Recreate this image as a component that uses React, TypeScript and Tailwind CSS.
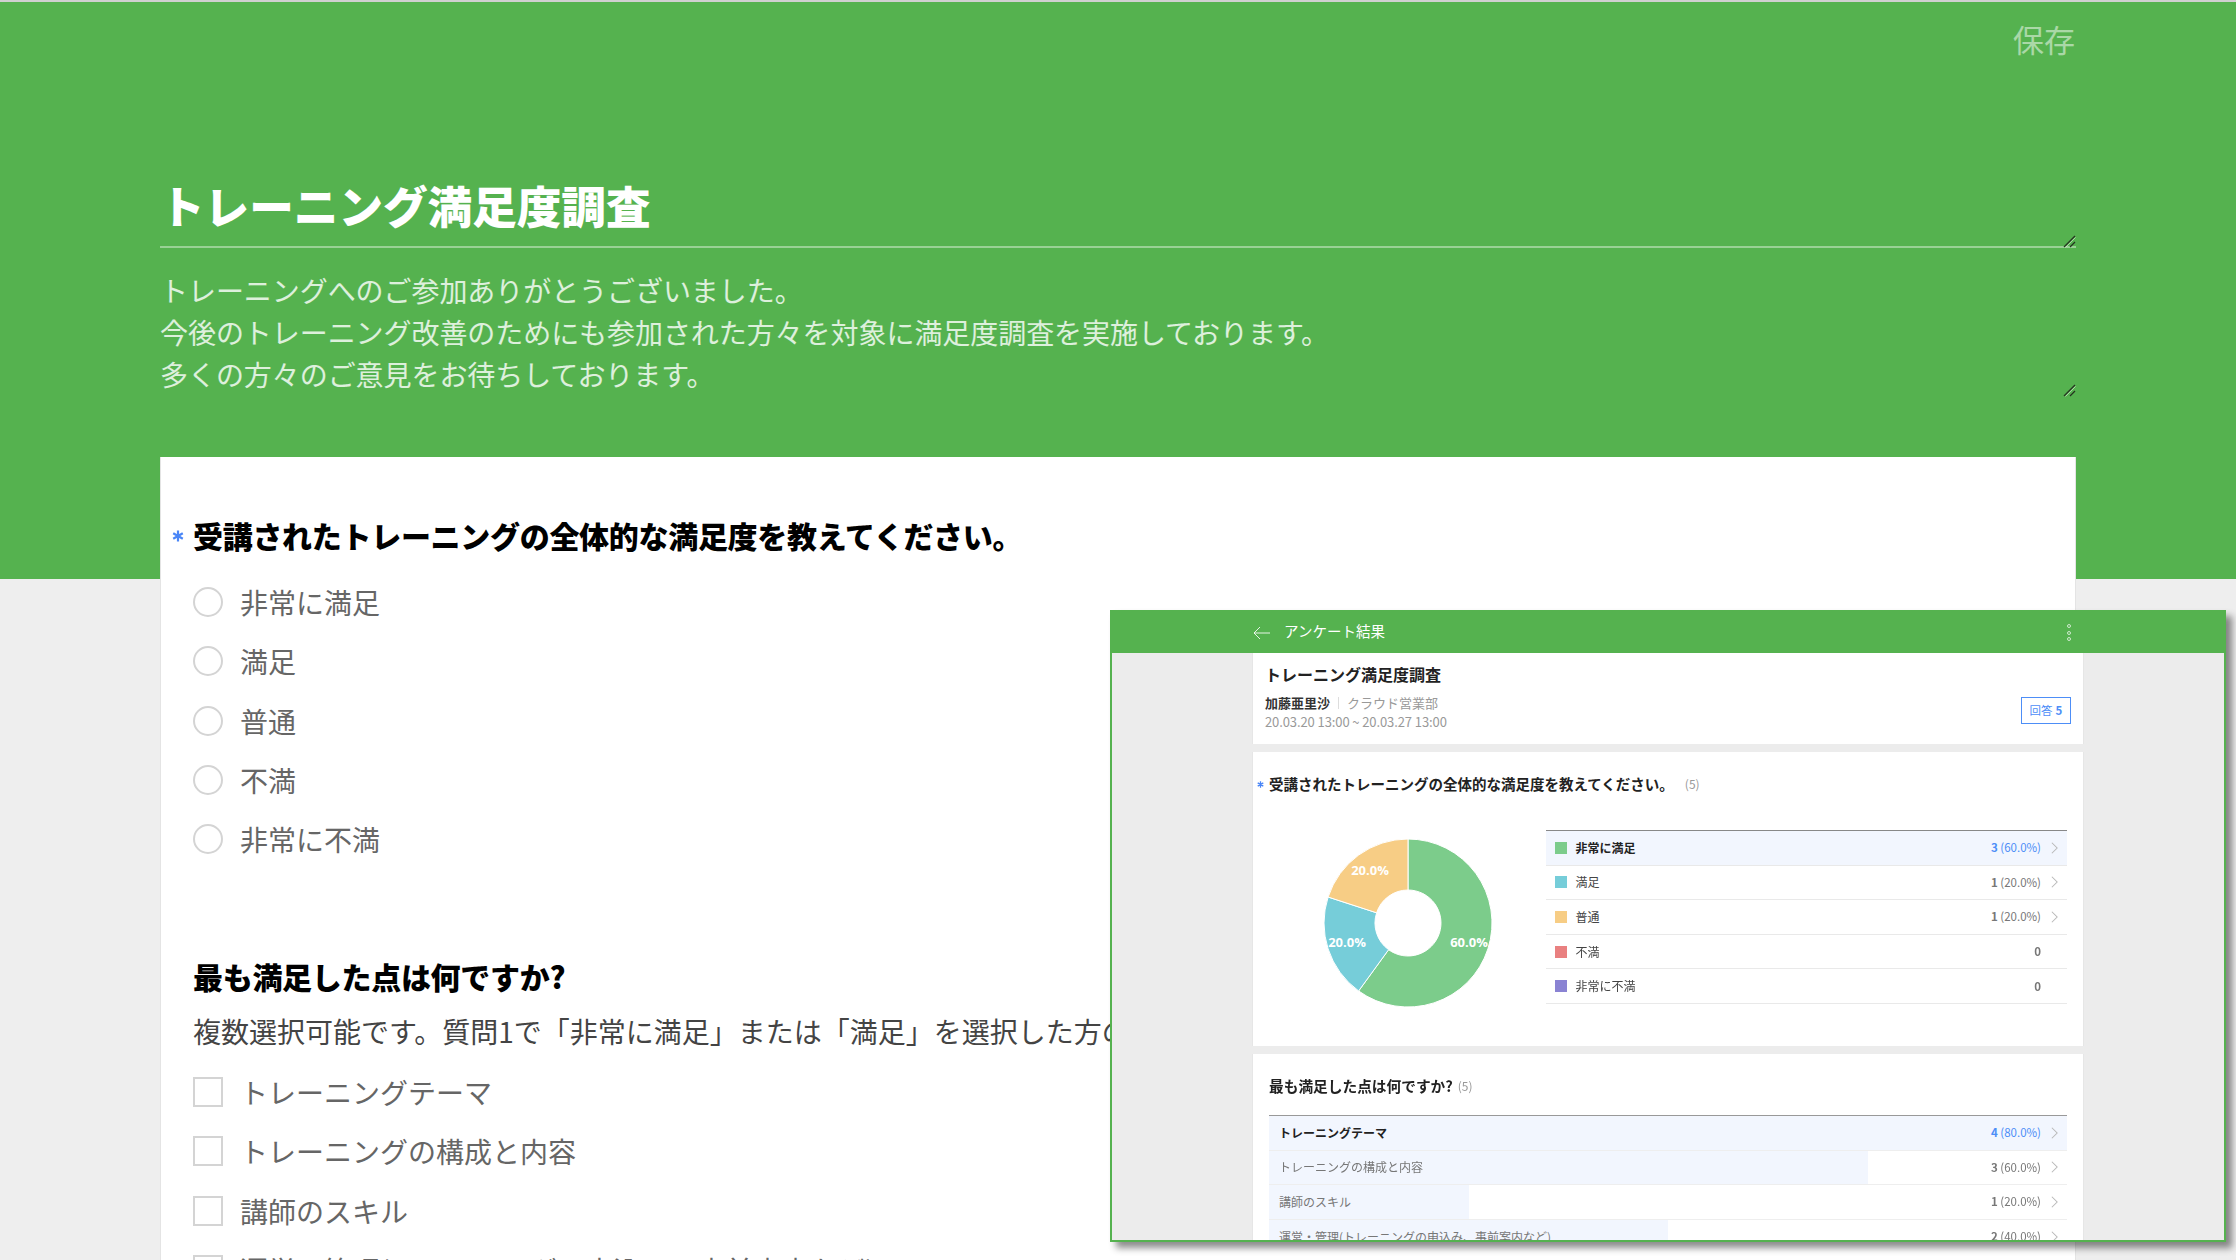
const satisfaction = ["非常に満足", "満足", "普通", "不満", "非常に不満"];
const points = [
  "トレーニングテーマ",
  "トレーニングの構成と内容",
  "講師のスキル",
  "運営・管理(トレーニングの申込み、事前案内など)",
];

const legend = [
  { label: "非常に満足", color: "bg-[#7ccc8b]", count: "3", pct: "(60.0%)", active: true },
  { label: "満足", color: "bg-[#76cdd9]", count: "1", pct: "(20.0%)" },
  { label: "普通", color: "bg-[#f7cd85]", count: "1", pct: "(20.0%)" },
  { label: "不満", color: "bg-[#e98080]", count: "0" },
  { label: "非常に不満", color: "bg-[#8a83d3]", count: "0" },
];

const bars = [
  { label: "トレーニングテーマ", width: 100, count: "4", pct: "(80.0%)", active: true },
  { label: "トレーニングの構成と内容", width: 75, count: "3", pct: "(60.0%)" },
  { label: "講師のスキル", width: 25, count: "1", pct: "(20.0%)" },
  { label: "運営・管理(トレーニングの申込み、事前案内など)", width: 50, count: "2", pct: "(40.0%)" },
];

function ResizeHandle() {
  return (
    <svg className="absolute right-0 -bottom-[2px]" width="13" height="13" viewBox="0 0 13 13" fill="none">
      <path d="M1 12 L12 1" stroke="#24331f" strokeWidth="1.2" />
      <path d="M7 12 L12 7" stroke="#24331f" strokeWidth="1.2" />
      <path d="M2.4 12.5 L12.5 2.4" stroke="#dcefd9" strokeWidth="0.7" />
    </svg>
  );
}

function Asterisk({ size }: { size: number }) {
  return (
    <svg width={size} height={size} viewBox="0 0 12 12" stroke="#4a86f7" strokeWidth="2.2" strokeLinecap="butt">
      <path d="M6 0.5 V11.5 M1.2 3.2 L10.8 8.8 M10.8 3.2 L1.2 8.8" />
    </svg>
  );
}

function Chevron() {
  return (
    <svg width="8" height="14" viewBox="0 0 8 14" fill="none" stroke="#b8b8b8" strokeWidth="1.2">
      <path d="M1 1 L7 7 L1 13" />
    </svg>
  );
}

function Donut() {
  return (
    <svg width="200" height="200" viewBox="0 0 200 200" className="shrink-0">
      <g stroke="#ffffff" strokeWidth="1">
        <path fill="#7ccc8b" d="M100 16 A84 84 0 1 1 50.63 167.96 L80.6 126.7 A33 33 0 1 0 100 67 Z" />
        <path fill="#76cdd9" d="M50.63 167.96 A84 84 0 0 1 20.11 74.04 L68.61 89.8 A33 33 0 0 0 80.6 126.7 Z" />
        <path fill="#f7cd85" d="M20.11 74.04 A84 84 0 0 1 100 16 L100 67 A33 33 0 0 0 68.61 89.8 Z" />
      </g>
      <g fill="#ffffff" fontSize="13" fontWeight="700" textAnchor="middle" fontFamily="'Open Sans', sans-serif">
        <text x="161" y="124">60.0%</text>
        <text x="39" y="124">20.0%</text>
        <text x="62" y="52">20.0%</text>
      </g>
    </svg>
  );
}

function ResultOverlay() {
  return (
    <div className="absolute left-[1110px] top-[610px] w-[1116px] h-[632px] border-2 border-[#55b24f] bg-[#ececec] overflow-hidden flex flex-col shadow-[6px_6px_7px_rgba(0,0,0,0.45)]">
      <div className="h-[41px] shrink-0 bg-[#55b24f] flex items-center justify-between pl-[141px] pr-[153px] text-white">
        <div className="flex items-center gap-[14px]">
          <svg width="17" height="14" viewBox="0 0 17 14" fill="none" stroke="#ffffff" strokeOpacity="0.85" strokeWidth="1" className="mt-[1px]">
            <path d="M7 1 L1 7 L7 13 M1 7 H17" />
          </svg>
          <span className="text-[14.5px] leading-[20px] -mt-[3px]">アンケート結果</span>
        </div>
        <div className="flex flex-col gap-[2.5px]">
          <span className="size-[4px] rounded-full border border-white/70" />
          <span className="size-[4px] rounded-full border border-white/70" />
          <span className="size-[4px] rounded-full border border-white/70" />
        </div>
      </div>

      <div className="w-[832px] mx-auto flex flex-col gap-[8px] blur-[0.4px]">
        <div className="h-[91px] shrink-0 bg-white border-x border-[#e6e6e6] pl-[12px] pr-[12px] flex justify-between items-end pb-[13px]">
          <div>
            <div className="text-[16px] leading-[20px] font-bold text-[#222] -mt-[1px]">トレーニング満足度調査</div>
            <div className="mt-[10px] flex items-center text-[13px] leading-[18px]">
              <span className="font-bold text-[#333]">加藤亜里沙</span>
              <span className="mx-[8px] w-px h-[12px] bg-[#ddd]" />
              <span className="text-[#999]">クラウド営業部</span>
            </div>
            <div className="mt-px text-[13px] leading-[18px] tracking-[-0.1px] text-[#999]">20.03.20 13:00 ~ 20.03.27 13:00</div>
          </div>
          <div className="w-[50px] h-[27px] mb-[7px] border border-[#4d8ef7] text-[#4d8ef7] text-[11.5px] flex items-center justify-center gap-[3px]">
            回答 <b>5</b>
          </div>
        </div>

        <div className="h-[294px] shrink-0 bg-white border-x border-[#e6e6e6] pt-[22px]">
          <div className="flex items-center h-[20px] text-[14.5px] font-bold text-[#222]">
            <span className="ml-[4px] mr-[5px]"><Asterisk size={7} /></span>
            <span>受講されたトレーニングの全体的な満足度を教えてください。</span>
            <span className="ml-[11px] text-[12px] font-normal text-[#999]">(5)</span>
          </div>
          <div className="mt-[29px] pl-[55px] pr-[16px] flex items-start justify-between">
            <Donut />
            <div className="w-[521px] mt-[7px] border-t border-[#888]">
              {legend.map((row) => (
                <div
                  key={row.label}
                  className={`h-[34.6px] flex items-center border-b border-[#e9e9e9] pl-[9px] pr-[9px] text-[12px] ${row.active ? "bg-[#f2f6fe]" : ""}`}
                >
                  <span className={`size-[12px] mr-[8.5px] ${row.color}`} />
                  <span className={row.active ? "font-bold text-[#222]" : "text-[#444]"}>{row.label}</span>
                  <span className={`ml-auto text-[11.5px] ${row.active ? "text-[#4d8ef7]" : "text-[#777]"}`}>
                    <b>{row.count}</b> {row.pct}
                  </span>
                  <span className="w-[17px] pl-[10px] flex">{row.pct && <Chevron />}</span>
                </div>
              ))}
            </div>
          </div>
        </div>

        <div className="grow bg-white border-x border-[#e6e6e6] pt-[22px] px-[16px]">
          <div className="flex items-center h-[20px] text-[14.7px] font-bold text-[#222]">
            最も満足した点は何ですか?
            <span className="ml-[5px] text-[12px] font-normal text-[#999]">(5)</span>
          </div>
          <div className="mt-[19px] border-t border-[#999]">
            {bars.map((row) => (
              <div key={row.label} className="relative h-[34.6px] flex items-center border-b border-[#eeeeee] pl-[10px] pr-[9px] text-[12px]">
                <div className="absolute inset-y-0 left-0 bg-[#f2f6fe]" style={{ width: `${row.width}%` }} />
                <span className={`relative ${row.active ? "font-bold text-[#222]" : "text-[#777]"}`}>{row.label}</span>
                <span className={`relative ml-auto text-[11.5px] ${row.active ? "text-[#4d8ef7]" : "text-[#777]"}`}>
                  <b>{row.count}</b> {row.pct}
                </span>
                <span className="relative w-[17px] pl-[10px] flex"><Chevron /></span>
              </div>
            ))}
          </div>
        </div>
      </div>
    </div>
  );
}

export default function App() {
  return (
    <div className="relative h-[1260px] overflow-hidden bg-[#eeeeee] font-['Noto_Sans_CJK_JP',sans-serif]">
      <header className="h-[579px] border-t-2 border-[#d0d0d0] bg-[#55b24f] px-[160px] pt-[17px]">
        <div className="flex justify-end pr-px text-[31px] leading-[40px] text-white/50">保存</div>
        <div className="relative mt-[118px] h-[71px] border-b-2 border-white/40">
          <h1 className="text-[44.6px] leading-[56px] font-black text-white">トレーニング満足度調査</h1>
          <ResizeHandle />
        </div>
        <div className="relative mt-[21px] text-[28px] leading-[42px] tracking-[-0.06px] text-white/80">
          <p>トレーニングへのご参加ありがとうございました。</p>
          <p>今後のトレーニング改善のためにも参加された方々を対象に満足度調査を実施しております。</p>
          <p>多くの方々のご意見をお待ちしております。</p>
          <ResizeHandle />
        </div>
      </header>

      <main className="relative -mt-[122px] ml-[160px] w-[1916px] h-[803px] bg-white border-x border-[#e4e4e4] pl-[32px] pt-[56px]">
        <h2 className="flex items-center text-[30px] leading-[44px] font-black tracking-[-0.3px] text-black">
          <span className="-ml-[21px] w-[21px] flex mt-[2px]">
            <Asterisk size={12} />
          </span>
          受講されたトレーニングの全体的な満足度を教えてください。
        </h2>
        <div className="mt-[30px] flex flex-col gap-[29.3px]">
          {satisfaction.map((label) => (
            <label key={label} className="flex items-center gap-[17px] h-[30px] text-[28px] leading-[30px] text-[#666]">
              <span className="size-[30px] rounded-full border-2 border-[#d4d4d4]" />
              {label}
            </label>
          ))}
        </div>

        <h2 className="mt-[100px] text-[30px] leading-[44px] font-black tracking-[-0.3px] text-black">最も満足した点は何ですか?</h2>
        <p className="mt-[12px] text-[28px] leading-[42px] text-[#444] whitespace-nowrap">
          複数選択可能です。質問1で「非常に満足」または「満足」を選択した方のみお答えください。
        </p>
        <div className="mt-[25px] flex flex-col gap-[29.3px]">
          {points.map((label) => (
            <label key={label} className="flex items-center gap-[17px] h-[30px] text-[28px] leading-[30px] text-[#666]">
              <span className="size-[30px] border-2 border-[#d4d4d4]" />
              {label}
            </label>
          ))}
        </div>
      </main>

      <ResultOverlay />
    </div>
  );
}
